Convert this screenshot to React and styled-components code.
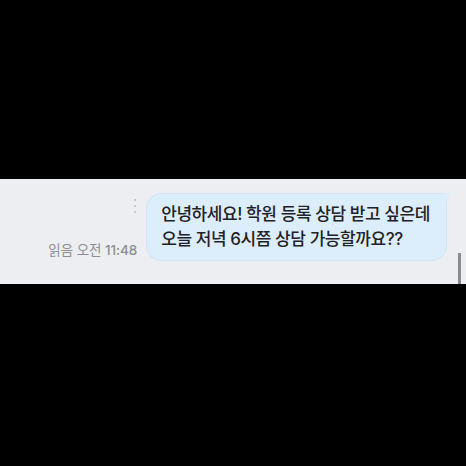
import React from 'react'
import styled, { createGlobalStyle } from 'styled-components'

const GlobalStyle = createGlobalStyle`
  html, body {
    margin: 0;
    padding: 0;
    background: #000;
  }
  body {
    font-family: Inter, "Noto Sans CJK KR", "Noto Sans", sans-serif;
  }
`

const Screen = styled.div`
  width: 466px;
  height: 466px;
  background: #000;
  padding-top: 179px;
  box-sizing: border-box;
`

const ChatBand = styled.div`
  position: relative;
  height: 105px;
  background: #eceef1;
  box-sizing: border-box;
  padding: 14px 19px 0 0;
`

const MessageRow = styled.div`
  display: flex;
  justify-content: flex-end;
  align-items: stretch;
  gap: 9px;
`

const Meta = styled.div`
  display: flex;
  flex-direction: column;
  align-items: flex-end;
  justify-content: space-between;
  padding: 6px 0 3px;
`

const Dots = styled.div`
  display: flex;
  flex-direction: column;
  gap: 4px;
  margin-right: 1px;
`

const Dot = styled.span`
  width: 2px;
  height: 2px;
  border-radius: 50%;
  background: #b9bbc0;
`

const ReadTime = styled.div`
  font-size: 13.5px;
  line-height: 16px;
  color: #8d8e93;
  letter-spacing: -0.1px;
  white-space: nowrap;
`

const Time = styled.span`
  font-weight: 500;
`

const Bubble = styled.div`
  position: relative;
  background: #dcedfb;
  border: 1px solid #d3e5f5;
  border-radius: 15px 3px 15px 15px;
  padding: 8px 16px 8px 14px;
  font-size: 17px;
  line-height: 25px;
  font-weight: 500;
  color: #1f2226;
  letter-spacing: -0.42px;
  white-space: nowrap;
`

const Tail = styled.svg`
  position: absolute;
  top: -1px;
  right: -6px;
`

const ScrollThumb = styled.div`
  position: absolute;
  right: 5px;
  bottom: 0;
  width: 3px;
  height: 31px;
  background: #8b8b8d;
`

export default function App() {
  return (
    <>
      <GlobalStyle />
      <Screen>
        <ChatBand>
          <MessageRow>
            <Meta>
              <Dots>
                <Dot />
                <Dot />
                <Dot />
              </Dots>
              <ReadTime>
                읽음 오전 <Time>11:48</Time>
              </ReadTime>
            </Meta>
            <Bubble>
              안녕하세요! 학원 등록 상담 받고 싶은데
              <br />
              오늘 저녁 6시쯤 상담 가능할까요??
              <Tail width="10" height="12" viewBox="0 0 10 12">
                <path d="M0 1 L9 0 C7 3 5 7 3 11 L0 11 Z" fill="#dcedfb" />
              </Tail>
            </Bubble>
          </MessageRow>
          <ScrollThumb />
        </ChatBand>
      </Screen>
    </>
  )
}
